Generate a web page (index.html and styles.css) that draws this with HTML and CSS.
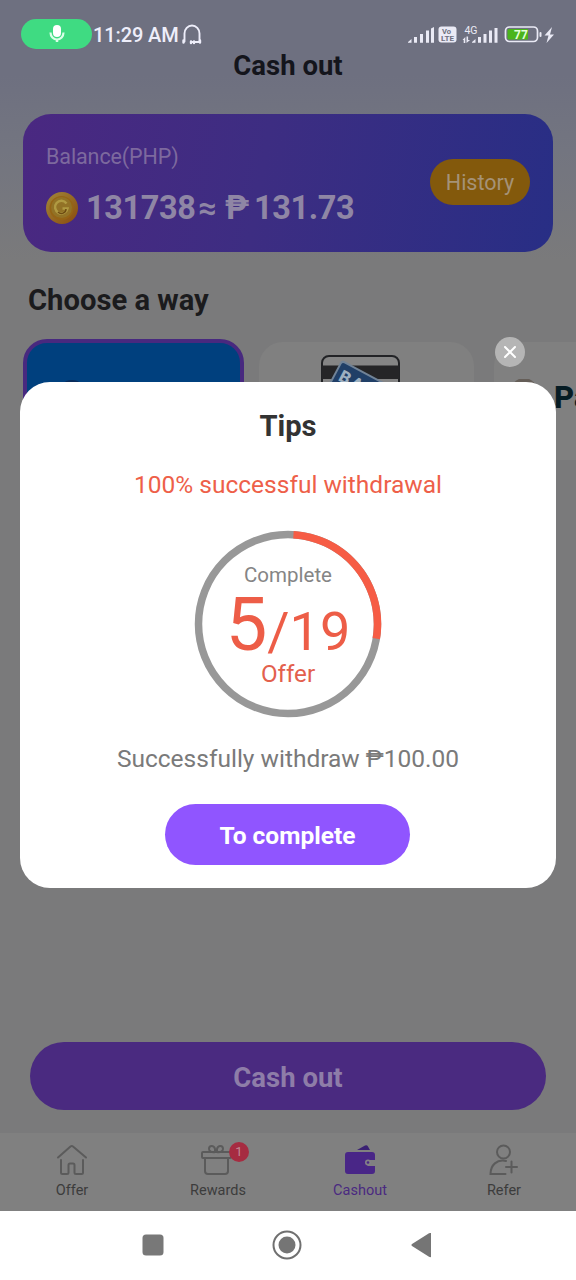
FILE: index.html
```html
<!DOCTYPE html>
<html lang="en">
<head>
<meta charset="utf-8">
<title>Cash out</title>
<link rel="stylesheet" href="styles.css">
</head>
<body>
<div class="screen">
  <header class="status">
    <span class="mic-pill">
      <svg width="18" height="22" viewBox="0 0 18 22"><rect x="5" y="2" width="8" height="12" rx="4" fill="#fff"/><path d="M2.500 9.500a6.500 7 0 0 0 13 0" fill="none" stroke="#d9ffe8" stroke-width="2.200"/><path d="M9 16.500v2.500" stroke="#d9ffe8" stroke-width="2.500"/></svg>
    </span>
    <span class="time">11:29 AM</span>
    <svg class="phones" width="22" height="22" viewBox="0 0 22 22" fill="none" stroke="#eeeefa" stroke-width="1.900" stroke-linecap="round"><path d="M3.500 17.500V9.500a7 7.500 0 0 1 15 0v8"/><path d="M2.500 16.500v2M19 16.500v2M10 17.500v1.500M13 17.500v1.500" stroke-width="2.400"/><path d="M10 18h9"/></svg>
    <span class="spacer"></span>
    <svg class="indicators" width="150" height="24" viewBox="0 0 150 24">
      <g fill="#eaeaf5"><path d="M2 19l3.500-3v3.800H2zM8 14h3v5.800H8zM14 11h3v8.800h-3zM20 7.500h3v12.300h-3zM28 4v15.800h-3V5.500z"/>
      <rect x="32.500" y="3.500" width="18" height="16" rx="3"/>
      <path d="M66 19l3.500-3v3.800H66zM72 14h3v5.800h-3zM77.500 11h3v8.800h-3zM83 7.500h3v12.300h-3zM88.500 5h3v14.800h-3z"/>
      <path d="M56.500 17l2.800-3v6h-1.600v-3zM60.500 13.500h1.600V17h2l-3.600 3z"/>
      <rect x="133.500" y="9" width="2" height="5" rx="1"/>
      <path d="M146 4l-7.500 8.500h4L140.500 20l7.500-8.500h-4z"/></g>
      <text class="tag" x="36" y="11" textLength="9" lengthAdjust="spacingAndGlyphs">Vo</text>
      <text class="tag" x="35" y="18.300" textLength="13" lengthAdjust="spacingAndGlyphs">LTE</text>
      <text class="gen" x="65" y="11">4G</text>
      <rect x="99.500" y="4" width="32" height="14.500" rx="4" fill="#6e7080" stroke="#eaeaf5" stroke-width="1.700"/>
      <path d="M103 6h19v10.500h-19a1.500 1.500 0 0 1-1.500-1.500V7.500A1.500 1.500 0 0 1 103 6z" fill="#4ab51c"/>
      <text class="level" x="115" y="15.700">77</text>
    </svg>
  </header>
  <h1 class="title">Cash out</h1>

  <section class="balance">
    <div class="funds">
      <p class="label">Balance(PHP)</p>
      <p class="amount">
        <svg class="coin" width="32" height="32" viewBox="0 0 32 32"><defs><linearGradient id="gold" x1="0" y1="0" x2="1" y2="1"><stop offset="0" stop-color="#a18739"/><stop offset="1" stop-color="#8a4b0d"/></linearGradient></defs><circle cx="16" cy="16" r="16" fill="url(#gold)"/><circle cx="15.500" cy="16" r="12" fill="#956415"/><circle cx="15.500" cy="15.500" r="10.500" fill="#927226"/><path d="M20.500 11.500a6.300 6.300 0 1 0 1 5h-5" fill="none" stroke="#b09a42" stroke-width="2.500"/><path d="M12 20c3 3 8 1 8-3" fill="none" stroke="#6d4b12" stroke-width="1.500"/></svg>
        <span class="points">131738</span><span class="approx">≈</span><span class="peso">₱</span><span class="money">131.73</span>
      </p>
    </div>
    <span class="history">History</span>
  </section>

  <h2 class="heading">Choose a way</h2>
  <div class="ways">
    <div class="way selected"><svg width="30" height="50" viewBox="0 0 30 50"><circle cx="12" cy="51.500" r="14.500" fill="#082b5b"/></svg></div>
    <div class="way bank">
      <svg width="80" height="80" viewBox="0 0 80 80"><rect x="1" y="1" width="77" height="60" rx="7" fill="#858585" stroke="#222326" stroke-width="2"/><path d="M1 10.500h77V24H1z" fill="#252527"/><g transform="translate(21 6) rotate(28)"><rect width="68" height="48" rx="3" fill="#203f67" stroke="#718397" stroke-width="2"/><text class="bank-name" x="5" y="19">BANK</text></g></svg>
    </div>
    <div class="way paypal">
      <svg width="50" height="36" viewBox="0 0 50 36"><circle cx="30" cy="12" r="13" fill="#655e58"/></svg><span>Pa</span>
    </div>
  </div>

  <div class="cashout">Cash out</div>

  <nav class="tabs">
    <div class="tab offer">
      <svg width="32" height="32" viewBox="0 0 32 32" fill="none" stroke="#5b5b5b" stroke-width="2" stroke-linecap="round" stroke-linejoin="round"><path d="M2 13.500L14.500 2.500a2 2 0 0 1 2.500 0L30 13.500M5 16v12.500q0 1.500 1.500 1.500H11q1.500 0 1.500-1.500V21a1.500 1.500 0 0 1 1.500-1.500h3a1.500 1.500 0 0 1 1.500 1.500v7.500q0 1.500 1.500 1.500h5.500q1.500 0 1.500-1.500V16"/></svg>
      <span>Offer</span>
    </div>
    <div class="tab rewards">
      <span class="icon-wrap"><svg width="32" height="32" viewBox="0 0 32 32" fill="none" stroke="#5b5b5b" stroke-width="2" stroke-linejoin="round"><rect x="2" y="8" width="29" height="6" rx="1"/><path d="M5 14v13q0 3 3 3h17q3 0 3-3V14M15 8C12 9 9 7 9 5c0-4 5-4 6 0v3zM17 8c3 1 6-1 6-3 0-4-5-4-6 0z"/></svg><b class="badge">1</b></span>
      <span>Rewards</span>
    </div>
    <div class="tab active">
      <svg width="32" height="32" viewBox="0 0 32 32"><path d="M13 6L21 1.500q2-1 3 1L26 6z" fill="#3b2173"/><path d="M4 8h24q3 0 3 3v5h-7a3.500 3.500 0 0 0 0 6h7v5q0 3-3 3H4q-3 0-3-3V11q0-3 3-3z" fill="#492687"/><circle cx="24" cy="18.500" r="3" fill="#848087"/><circle cx="24" cy="18.500" r="1.300" fill="#492687"/></svg>
      <span>Cashout</span>
    </div>
    <div class="tab refer">
      <svg width="32" height="32" viewBox="0 0 32 32" fill="none" stroke="#5b5b5b" stroke-width="2" stroke-linecap="round"><circle cx="15.500" cy="8" r="6.500"/><path d="M18 17C9 15 2.500 21 2.500 30h15M18 23h11M23.500 17.500v11"/></svg>
      <span>Refer</span>
    </div>
  </nav>

  <footer class="system">
    <svg width="22" height="22" viewBox="0 0 22 22"><rect x=".5" y=".5" width="21" height="21" rx="3.500" fill="#787878"/></svg>
    <svg width="30" height="30" viewBox="0 0 30 30"><circle cx="15" cy="15" r="13.500" fill="none" stroke="#707070" stroke-width="2"/><circle cx="15" cy="15" r="8.500" fill="#757575"/></svg>
    <svg width="22" height="26" viewBox="0 0 22 26"><path d="M21 1v24q-1 .4-2-.3L2 14q-1.400-1 0-2L19 1.300q1-.6 2-.3z" fill="#757575"/></svg>
  </footer>

  <div class="close"><svg width="12" height="12" viewBox="0 0 12 12" stroke="#fff" stroke-width="2" stroke-linecap="round"><path d="M1 1l10 10M11 1L1 11"/></svg></div>
  <section class="dialog">
    <h2 class="tips">Tips</h2>
    <p class="promise">100% successful withdrawal</p>
    <div class="ring">
      <svg class="ring-track" width="188" height="188" viewBox="0 0 188 188" fill="none" stroke-width="7.500"><circle cx="94" cy="94" r="89.500" stroke="#989898"/><circle cx="94" cy="94" r="89.500" stroke="#f65c45" pathLength="360" stroke-dasharray="96 264" transform="rotate(-86.500 94 94)"/></svg>
      <span class="complete">Complete</span>
      <span class="count"><b>5</b>/19</span>
      <span class="unit">Offer</span>
    </div>
    <p class="result">Successfully withdraw ₱100.00</p>
    <div class="go">To complete</div>
  </section>
</div>
</body>
</html>
```
FILE: styles.css
```css
* { box-sizing: border-box; }
body { margin: 0; font-family: Roboto, sans-serif; }
h1, h2, p { margin: 0; }
svg { display: block; flex: none; }
.screen {
  position: relative; display: flex; flex-direction: column;
  width: 576px; height: 1280px; overflow: hidden;
  background: linear-gradient(#6e7080 0, #6e7080 75px, #737580 150px, #7a7a7b 260px, #7a7a7b 100%);
}
.status { display: flex; align-items: center; height: 52px; padding: 17px 20px 0 21px; }
.mic-pill { display: flex; align-items: center; justify-content: center; width: 71px; height: 30px; margin-bottom: 1px; border-radius: 15px; background: #3fdb82; }
.time { width: 89px; padding-left: 1px; font-size: 20px; font-weight: 500; letter-spacing: -.1px; color: #eeeefa; white-space: nowrap; }
.spacer { flex: 1; }
.tag { font-size: 7.500px; font-weight: 700; fill: #6e7080; }
.gen { font-size: 10.500px; fill: #eaeaf5; text-anchor: middle; }
.level { font-size: 12px; font-weight: 700; fill: #e4ffd8; text-anchor: middle; }
.title { height: 62px; line-height: 28px; font-size: 27.500px; font-weight: 700; text-align: center; color: #14151c; }
.balance {
  display: flex; align-items: center; justify-content: space-between; flex: none;
  width: 530px; height: 138px; margin-left: 23px; padding: 0 23px; border-radius: 28px;
  background: linear-gradient(100deg, #4a2881, #3d2d82 45%, #282e85);
}
.funds { padding-top: 6px; }
.label { height: 44px; line-height: 26px; font-size: 21.500px; letter-spacing: -.1px; color: #7d699e; }
.amount { display: flex; align-items: center; height: 40px; font-size: 32.500px; font-weight: 700; color: #8f86a5; }
.coin { margin-bottom: 1px; }
.points { width: 112px; margin-left: 8px; letter-spacing: -.4px; }
.approx { width: 27px; font-size: 32px; }
.peso { width: 29px; }
.money { letter-spacing: -.4px; }
.history { width: 100px; height: 46px; margin-bottom: 2px; border-radius: 23px; background: #83590c; color: #a59277; font-size: 21.500px; line-height: 47px; text-align: center; }
.heading { height: 87px; padding-left: 28px; line-height: 96px; font-size: 29.200px; font-weight: 700; color: #1b1b1d; }
.ways { display: flex; flex: none; height: 121px; padding-left: 23px; }
.way { flex: none; height: 118px; border-radius: 24px; background: #808080; }
.selected { width: 221px; margin-right: 15px; padding-left: 33px; border: 4px solid #48297f; background: #00407e; }
.bank { width: 215px; margin: 3px 20px 0 0; padding: 13px 0 0 62px; }
.bank-name { font-size: 17px; font-weight: 900; letter-spacing: 2px; fill: #9db0c0; }
.paypal { display: flex; align-items: flex-start; width: 215px; margin-top: 3px; padding: 37px 0 0; border-radius: 24px 0 0 24px; }
.paypal span { padding-left: 10px; font-size: 31px; font-weight: 800; line-height: 38px; color: #061c24; }
.cashout { flex: none; width: 516px; height: 68px; margin: 582px 30px 23px; border-radius: 34px; background: #4a2a80; color: #8e7da8; font-size: 27.500px; font-weight: 700; line-height: 71px; text-align: center; }
.tabs { display: grid; grid-template-columns: repeat(4, 144px); flex: none; height: 78px; background: #808080; }
.tab { display: flex; flex-direction: column; align-items: center; padding-top: 11px; font-size: 14.500px; line-height: 29px; color: #3c3c3c; }
.rewards { padding-left: 4px; }
.icon-wrap { position: relative; margin-right: 4px; }
.badge { position: absolute; left: 29px; top: -2px; width: 20px; height: 20px; border-radius: 50%; background: #a62c41; color: #c08b94; font-size: 13px; font-weight: 400; line-height: 20px; text-align: center; }
.active { color: #4a2a80; }
.system { display: flex; align-items: center; justify-content: space-between; flex: 1; padding: 0 144px 2px 142px; background: #fff; }
.close { position: absolute; left: 495px; top: 337px; display: flex; align-items: center; justify-content: center; width: 30px; height: 30px; border-radius: 50%; background: #b5b5b5; }
.dialog { position: absolute; left: 20px; top: 382px; display: flex; flex-direction: column; align-items: center; width: 536px; height: 506px; padding-top: 27px; border-radius: 30px; background: #fff; }
.tips { height: 61px; line-height: 35px; font-size: 29.200px; font-weight: 700; color: #333; }
.promise { height: 60px; line-height: 30px; font-size: 24.500px; color: #ee5f49; }
.ring { position: relative; display: flex; flex-direction: column; align-items: center; width: 188px; height: 188px; padding-top: 33px; }
.ring-track { position: absolute; inset: 0; }
.complete { height: 26px; line-height: 25px; font-size: 20.500px; color: #858585; }
.count { height: 72px; line-height: 72px; font-size: 54px; color: #ed5d47; }
.count b { font-size: 74px; font-weight: 400; }
.unit { height: 28px; line-height: 27px; font-size: 24.200px; color: #e3604d; }
.result { height: 86px; line-height: 81px; font-size: 24.500px; color: #7a7a7a; }
.go { width: 245px; height: 61px; margin-right: 1px; border-radius: 31px; background: #9055ff; color: #fff; font-size: 24.500px; font-weight: 700; line-height: 63px; text-align: center; }
```
